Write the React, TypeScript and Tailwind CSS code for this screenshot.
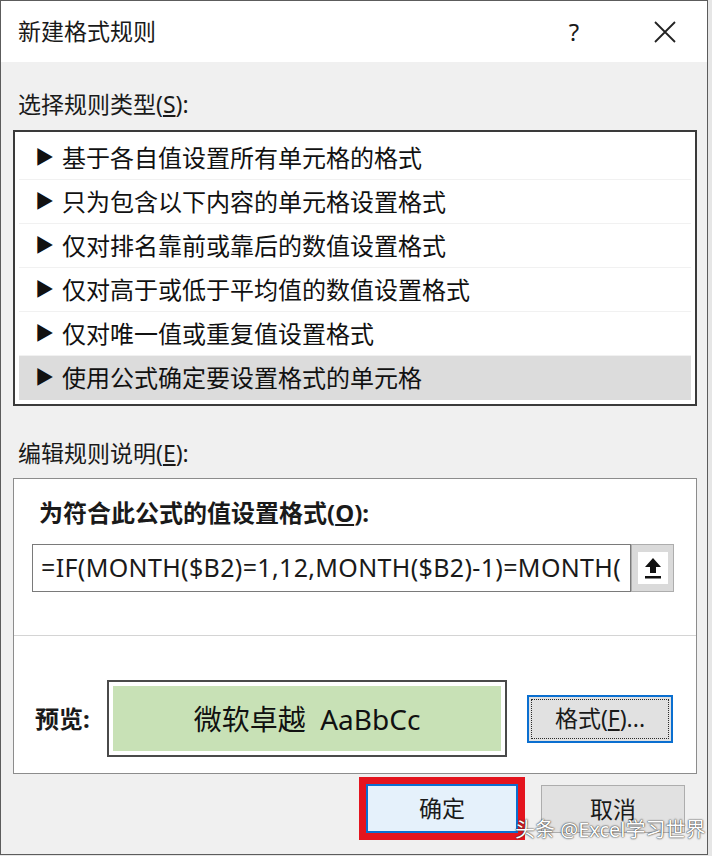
const FONT = { fontFamily: '"Noto Sans", "Noto Sans CJK SC", sans-serif' };

const ruleTypes = [
  "基于各自值设置所有单元格的格式",
  "只为包含以下内容的单元格设置格式",
  "仅对排名靠前或靠后的数值设置格式",
  "仅对高于或低于平均值的数值设置格式",
  "仅对唯一值或重复值设置格式",
  "使用公式确定要设置格式的单元格",
];

function UploadIcon() {
  return (
    <svg width="22" height="24" viewBox="0 0 22 24">
      <path d="M11 2 L19 11 L14 11 L14 17 L8 17 L8 11 L3 11 Z" fill="#111" />
      <rect x="3" y="20" width="16" height="2.5" fill="#111" />
    </svg>
  );
}

export default function App() {
  return (
    <div className="w-[712px] h-[856px] bg-[#e6e6e6] text-[#1a1a1a]" style={FONT}>
      <div className="relative w-[708px] h-[855px] bg-[#f0f0f0] border border-[#5c5c5c] flex flex-col overflow-hidden">
        {/* Title bar */}
        <div className="h-[61px] bg-white flex items-center shrink-0">
          <span className="pl-[17px] text-[23px]">新建格式规则</span>
          <span className="ml-auto text-[24px] w-[30px] text-center mr-[64px]">?</span>
          <svg className="mr-[30px]" width="24" height="24" viewBox="0 0 24 24">
            <path d="M2 2 L22 22 M22 2 L2 22" stroke="#222" strokeWidth="1.8" />
          </svg>
        </div>

        {/* Body */}
        <div className="flex flex-col pl-[12px] pr-[10px]">
          <div className="mt-[26px] h-[32px] leading-[32px] text-[23px] pl-[5px]">
            选择规则类型(<span className="underline underline-offset-2">S</span>):
          </div>

          <div className="mt-[10px] h-[276px] border-2 border-[#3a3a3a] bg-white p-[4px] flex flex-col">
            {ruleTypes.map((t, i) => (
              <div
                key={t}
                className={
                  "h-[44px] flex items-center text-[24px] text-[#111] border-b " +
                  (i === ruleTypes.length - 1
                    ? "bg-[#dcdcdc] border-transparent"
                    : "border-[#f1f1f1]")
                }
              >
                <span className="text-[19px] ml-[16px] w-[27px] text-[#111]">▶</span>
                <span>{t}</span>
              </div>
            ))}
          </div>

          <div className="mt-[31px] h-[32px] leading-[32px] text-[23px] pl-[5px]">
            编辑规则说明(<span className="underline underline-offset-2">E</span>):
          </div>

          <div className="mt-[9px] h-[296px] border border-[#8c8c8c] bg-white flex flex-col">
            <div className="mt-[18px] h-[32px] leading-[32px] text-[24px] font-bold pl-[25px]">
              为符合此公式的值设置格式(<span className="underline underline-offset-2">O</span>):
            </div>

            <div className="mt-[15px] ml-[18px] flex h-[48px]">
              <div className="w-[599px] border border-[#7a7a7a] bg-white flex items-center pl-[8px] text-[25px] tracking-[0.35px] overflow-hidden whitespace-nowrap">
                =IF(MONTH($B2)=1,12,MONTH($B2)-1)=MONTH(
              </div>
              <div className="w-[43px] border border-[#adadad] bg-[#dadada] flex items-center justify-center">
                <div className="w-[30px] h-[32px] bg-white flex items-center justify-center">
                  <UploadIcon />
                </div>
              </div>
            </div>

            <div className="mt-[43px] h-px bg-[#d4d4d4]" />

            <div className="mt-[44px] flex items-center h-[77px]">
              <span className="ml-[21px] w-[72px] text-[24px] font-bold">预览:</span>
              <div className="w-[400px] h-[77px] border-2 border-[#4a4a4a] bg-white p-[4px]">
                <div className="h-full bg-[#c8e1b6] flex items-center justify-center text-[28px] text-[#111]">
                  微软卓越&nbsp;&nbsp;AaBbCc
                </div>
              </div>
              <div className="ml-[20px] w-[146px] h-[48px] border-2 border-[#0a6fd0] bg-[#e1e1e1] p-[2px]">
                <div className="h-full border border-dotted border-[#2a2a2a] flex items-center justify-center text-[23px]">
                  格式(<span className="underline underline-offset-2">F</span>)...
                </div>
              </div>
            </div>
          </div>

          {/* Buttons */}
          <div className="mt-[3px] flex items-start">
            <div className="ml-[346px] w-[166px] h-[63px] bg-[#e4141e] p-[7px]">
              <div className="h-full border-2 border-[#0a6fd0] bg-[#e5f1fb] flex items-center justify-center text-[23px]">
                确定
              </div>
            </div>
            <div className="ml-[16px] mt-[8px] w-[144px] h-[48px] border border-[#adadad] bg-[#e1e1e1] flex items-start justify-center pt-[6px] text-[23px]">
              取消
            </div>
          </div>
        </div>

        {/* Watermark */}
        <div
          className="absolute left-[514px] top-[817px] text-[20px] leading-[24px] text-white whitespace-nowrap"
          style={{ textShadow: "0 0 2px #333, 0 0 1px #333" }}
        >
          头条 @Excel学习世界
        </div>
      </div>
    </div>
  );
}
